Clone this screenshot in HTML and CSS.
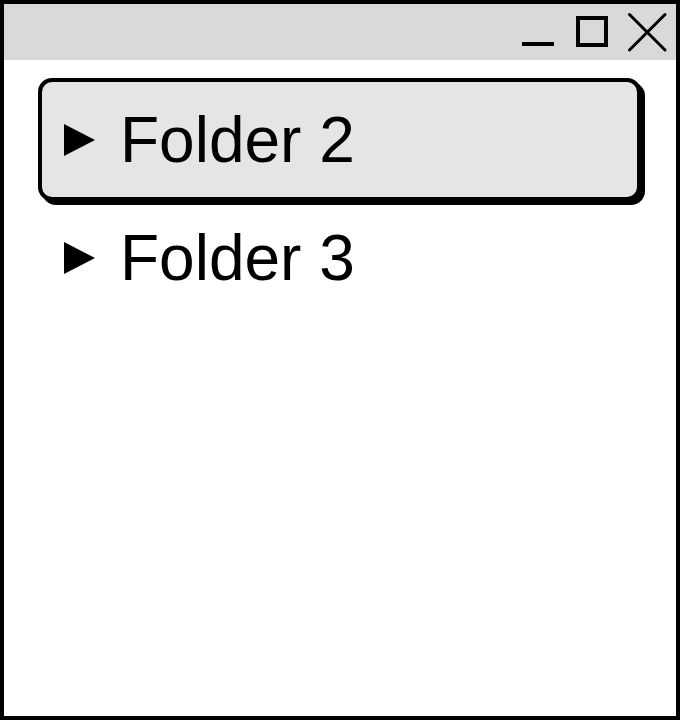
FILE: index.html
```html
<!DOCTYPE html>
<html lang="en">
<head>
  <meta charset="UTF-8" />
  <meta name="viewport" content="width=device-width, initial-scale=1.0"/>
  <title>Folders</title>
  <link rel="stylesheet" href="styles.css">
</head>
<body>
  <div class="window">
    <div class="titlebar">
      <svg class="ctl" viewBox="0 0 40 40" aria-label="Minimize">
        <rect x="3" y="30" width="32" height="4" fill="#000"/>
      </svg>
      <svg class="ctl" viewBox="0 0 40 40" aria-label="Maximize">
        <rect x="5" y="6" width="28" height="27" fill="none" stroke="#000" stroke-width="4"/>
      </svg>
      <svg class="ctl" viewBox="0 0 40 40" aria-label="Close">
        <path d="M2.5 2.5 L38 38 M38 2.5 L2.5 38" stroke="#000" stroke-width="3" stroke-linecap="round"/>
      </svg>
    </div>

    <div class="tree">
      <div class="item selected">
        <svg class="arrow" viewBox="0 0 31 32"><polygon points="0,0 31,16 0,32" fill="#000"/></svg>
        <span class="name">Folder 2</span>
      </div>
      <div class="item">
        <svg class="arrow" viewBox="0 0 31 32"><polygon points="0,0 31,16 0,32" fill="#000"/></svg>
        <span class="name">Folder 3</span>
      </div>
    </div>
  </div>
</body>
</html>
```

FILE: styles.css
```css
body {
  margin: 0;
  font-family: "Liberation Sans", Arial, sans-serif;
  background: #fff;
}
.window {
  width: 680px;
  height: 720px;
  box-sizing: border-box;
  border: 4px solid #000;
  background: #fff;
}
.titlebar {
  height: 56px;
  background: #d9d9d9;
  display: flex;
  align-items: center;
  justify-content: flex-end;
  gap: 14px;
  padding-right: 9px;
}
.ctl {
  width: 40px;
  height: 40px;
  display: block;
}
.tree {
  padding: 18px 35px 0 34px;
}
.item {
  height: 120px;
  box-sizing: border-box;
  border: 4px solid transparent;
  border-radius: 14px;
  display: flex;
  align-items: center;
  padding-left: 22px;
}
.item.selected {
  height: 123px;
  margin-bottom: -3px;
  background: #e5e5e5;
  border-color: #000;
  box-shadow: 4px 4px 0 #000;
}
.arrow {
  width: 31px;
  height: 32px;
  flex: none;
  display: block;
}
.name {
  font-size: 64px;
  color: #000;
  margin-left: 25px;
}
```
